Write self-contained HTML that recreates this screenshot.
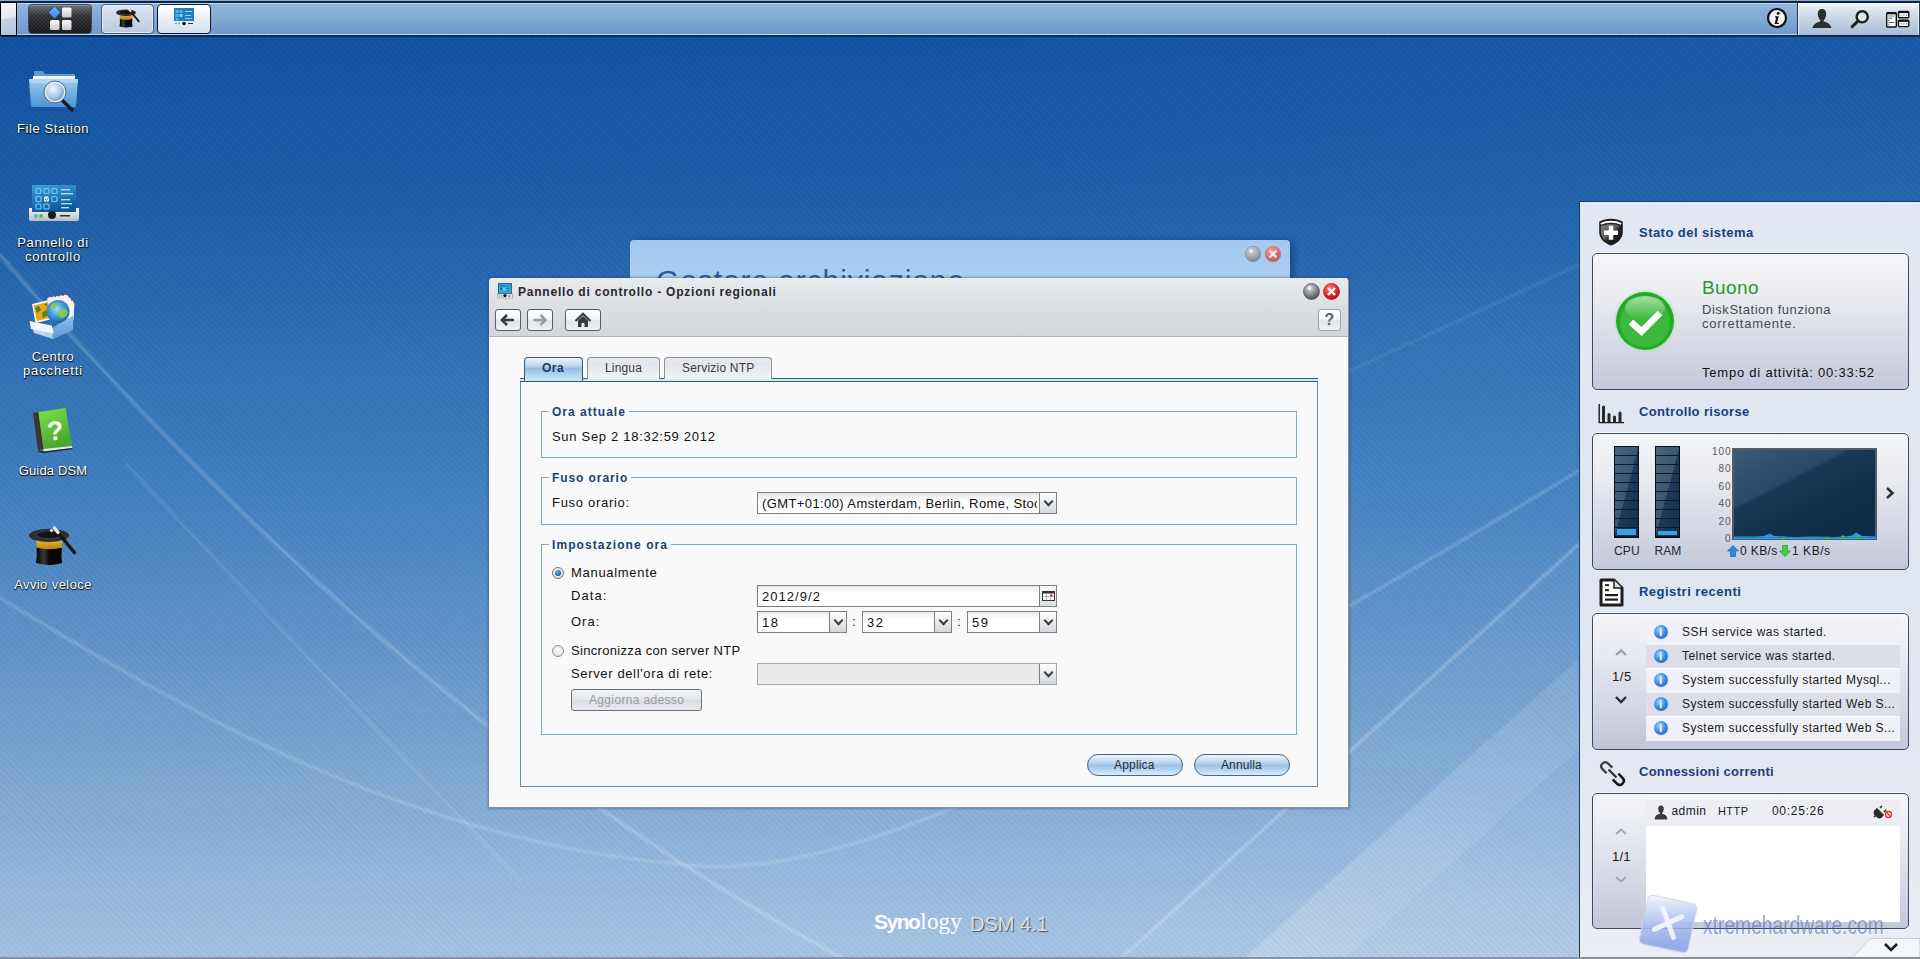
<!DOCTYPE html>
<html><head><meta charset="utf-8">
<style>
*{box-sizing:border-box}
html,body{margin:0;padding:0}
body{width:1920px;height:959px;overflow:hidden;position:relative;font-family:"Liberation Sans",sans-serif;font-size:12px;color:#000}
.a{position:absolute}
#bg{left:0;top:0;width:1920px;height:959px;background:linear-gradient(to bottom,#0d4c9c 0px,#1152a3 40px,#1d5fab 205px,#3577bb 400px,#4281c1 490px,#6f9fd0 705px,#9fbfe0 910px,#a6c5e4 959px)}
#stripes{left:0;top:0;width:1920px;height:959px;background:repeating-linear-gradient(45deg,rgba(0,0,40,0.028) 0px,rgba(0,0,40,0.028) 2.2px,rgba(255,255,255,0.018) 2.2px,rgba(255,255,255,0.018) 4.5px)}
#top{left:0;top:0;width:1920px;height:37px;background:linear-gradient(to bottom,#8fa8c8 0,#8fa8c8 1px,#0a2448 1px,#0a2448 3px,#c0d8f4 3px,#c0d8f4 4px,#95b5db 4px,#6e9acc 34px,#b8d4f0 34px,#b8d4f0 35px,#0a2a58 35px,#0a2a58 37px)}
.dtxt{color:#fff;font-size:13px;letter-spacing:0.65px;text-align:center;width:110px;left:-2px;line-height:13.6px;text-shadow:0 1px 1px rgba(0,0,0,0.8),1px 1px 1px rgba(0,0,0,0.5),0 0 1px rgba(0,0,0,0.5)}
.nb{border:1px solid #5a5e62;border-radius:3px;background:linear-gradient(to bottom,#ffffff 0,#f4f5f6 45%,#e2e4e6 55%,#eef0f2 100%)}
.tab{top:357px;height:22px;border:1px solid #8a9096;border-bottom:none;border-radius:4px 4px 0 0;background:linear-gradient(to bottom,#e8eaee 0,#e2e6ea 30%,#f2f4f6 100%)}
.fs{left:541px;width:756px;border:1px solid #82a8c0}
.lg{left:549px;padding:0 3px;background:#f9f9f9;font-size:12px;font-weight:bold;color:#1a4274;white-space:nowrap}
.t13{font-size:13px;letter-spacing:0.7px;color:#111;white-space:nowrap}
.t12{font-size:12px;letter-spacing:0.45px;color:#1a1a1a;white-space:nowrap}
.cb{border:1px solid #7f7f7f;background:linear-gradient(to bottom,#e8eaec 0,#ffffff 35%,#ffffff 100%)}
.trg{top:0;width:17px;height:20px;border-left:1px solid #7f7f7f;background:linear-gradient(to bottom,#ffffff 0,#eceef0 40%,#d4d8dc 100%)}
.trg::after{content:"";position:absolute;left:4.5px;top:5px;width:5px;height:5px;border-right:2.4px solid #3a3e42;border-bottom:2.4px solid #3a3e42;transform:rotate(45deg)}
.radio{width:12px;height:12px;border-radius:50%;border:1px solid #8a9096;background:radial-gradient(circle at 50% 40%,#ffffff 0,#e4e6e8 60%,#c4c8cc 100%)}
.radio.on{border-color:#6a7a8a}
.radio.on::after{content:"";position:absolute;left:2px;top:2px;width:6px;height:6px;border-radius:50%;background:radial-gradient(circle at 40% 35%,#6ac0f0 0,#1a6aaa 60%,#0a3a6a 100%)}
.pill{top:754px;width:96px;height:22px;border:1px solid #3e6890;border-radius:11px;background:linear-gradient(to bottom,#eef4fa 0,#c8dcf0 30%,#9cc2e6 55%,#c4e0f6 85%,#dcecf8 100%)}
.sh{left:1639px;font-size:13px;font-weight:bold;color:#17407e;letter-spacing:0.4px;white-space:nowrap}
.card{left:1592px;width:317px;border:1.5px solid #404a5e;border-radius:5px;background:linear-gradient(to bottom,#f5f6f8 0,#e8eaf0 35%,#c3c7da 100%);box-shadow:0 -1px 0 rgba(255,255,255,0.9)}
.bar{top:446px;width:25px;height:92px;border:1.5px solid #0a0e14;background:linear-gradient(105deg,#4a6680 0,#3a5670 50%,#1e3a58 50%,#143050 100%)}
.bar::before{content:"";position:absolute;left:0;top:0;right:0;bottom:0;background:repeating-linear-gradient(to bottom,transparent 0,transparent 7.9px,#0c1a28 7.9px,#0c1a28 9px)}
.bar .fill{position:absolute;left:2px;right:2px;bottom:2px;height:6px;background:#3aa0ea}
.loglist{left:1646px;top:620px;width:254px}
.lr{position:relative;height:24px;padding-left:36px;padding-top:4.7px;font-size:12px;letter-spacing:0.45px;color:#1a1a1a;white-space:nowrap}
.ii{position:absolute;left:8px;top:5px;width:14px;height:14px;border-radius:50%;background:radial-gradient(circle at 40% 35%,#a0d0ff 0,#3a88e0 50%,#1a5ab8 100%)}
.ii::after{content:"i";position:absolute;left:0;top:0;width:14px;text-align:center;font-weight:bold;font-size:11px;line-height:14px;color:#fff}

</style></head>
<body>
<div id="bg" class="a"></div>
<svg class="a" style="left:0;top:0" width="1920" height="959" viewBox="0 0 1920 959">
 <defs><filter id="soft" x="-5%" y="-5%" width="110%" height="110%"><feGaussianBlur stdDeviation="0.9"/></filter>
 <linearGradient id="wedge" x1="0" y1="1" x2="1" y2="0"><stop offset="0" stop-color="#fff" stop-opacity="0.16"/><stop offset="1" stop-color="#fff" stop-opacity="0.05"/></linearGradient></defs>
 <g fill="none" stroke="#ffffff" stroke-linecap="round" filter="url(#soft)">
  <path d="M0 255 Q400 720 842 958" stroke-opacity="0.24" stroke-width="3"/>
  <path d="M127 465 Q300 650 520 880" stroke-opacity="0.12" stroke-width="2.6"/>
  <path d="M0 598 C170 700 400 845 702 866 C850 876 1100 760 1580 470" stroke-opacity="0.2" stroke-width="3"/>
  <path d="M1120 959 L1600 525" stroke-opacity="0.26" stroke-width="3"/>
  <path d="M1000 533 L1600 255" stroke-opacity="0.09" stroke-width="2.6"/>
 </g>
 <path d="M1243 959 L1600 640 L1600 959 Z" fill="url(#wedge)" filter="url(#soft)"/>
 <path d="M1243 959 L1600 640 L1600 730 L1345 959 Z" fill="#ffffff" fill-opacity="0.08" filter="url(#soft)"/>
 <path d="M1120 959 L1600 525 L1600 640 L1243 959 Z" fill="#ffffff" fill-opacity="0.035"/>
 <rect x="0" y="957" width="1920" height="2" fill="#8494ac"/>
</svg>
<div class="a" style="left:0;top:0;width:1920px;height:959px;background:linear-gradient(to right,rgba(0,10,40,0.025) 0,rgba(0,10,40,0) 45%,rgba(255,255,255,0.035) 100%)"></div>
<div id="stripes" class="a"></div>
<div id="top" class="a"></div>
<!-- topbar items -->
<div class="a" style="left:0;top:2px;width:17px;height:34px;border:1.5px solid #000;background:linear-gradient(170deg,#f4f6fa 0,#e4eaf2 45%,#c4d2e4 50%,#b4c6de 100%)"></div>
<div class="a" style="left:28px;top:4px;width:64px;height:30px;border-radius:4px;border:1px solid #3a4a60;background:repeating-conic-gradient(rgba(255,255,255,0.07) 0 25%,rgba(0,0,0,0) 0 50%) 0 0/4px 4px,linear-gradient(to bottom,#6a6e74 0,#2a2c30 40%,#151618 100%);box-shadow:inset 0 1px 0 rgba(255,255,255,0.25)"></div>
<svg class="a" style="left:28px;top:4px" width="64" height="30" viewBox="0 0 64 30">
  <defs><linearGradient id="sq" x1="0" y1="0" x2="0" y2="1"><stop offset="0" stop-color="#fafafa"/><stop offset="1" stop-color="#c8c8c8"/></linearGradient>
  <linearGradient id="dia" x1="0" y1="0" x2="0" y2="1"><stop offset="0" stop-color="#7ab8f8"/><stop offset="1" stop-color="#2a84e8"/></linearGradient></defs>
  <path d="M26.5 2 L32.5 8.5 L26.5 15 L20.5 8.5 Z" fill="url(#dia)" stroke="#1a3a6a" stroke-width="0.6"/>
  <rect x="34" y="3.5" width="9.5" height="10" rx="1.5" fill="url(#sq)"/>
  <rect x="22" y="16" width="9.5" height="10" rx="1.5" fill="url(#sq)"/>
  <rect x="34" y="16" width="9.5" height="10" rx="1.5" fill="url(#sq)"/>
</svg>
<div class="a" style="left:101px;top:4px;width:53px;height:30px;border-radius:4px;border:1px solid #3e5a82;background:linear-gradient(to bottom,#dde6f2 0,#b8cae0 100%);box-shadow:inset 0 0 0 1px rgba(255,255,255,0.6)"></div>
<svg class="a" style="left:115px;top:4.5px" width="26" height="24" viewBox="0 0 52 48">
  <path d="M9.6 27.6 Q22 30.5 35 27.6 Q33.8 36 35 43 Q22 47 9 43 Q10.4 36 9.6 27.6 Z" fill="url(#hat)"/>
  <path d="M9.4 18 L35.2 18 L35 27.8 Q22 30.5 9.6 27.8 Z" fill="url(#band)"/>
  <ellipse cx="22" cy="15.4" rx="20" ry="6.6" fill="#2e2e2e"/>
  <ellipse cx="22" cy="14.8" rx="12.5" ry="4" fill="#141414" stroke="#4a4a4a" stroke-width="0.8"/>
  <path d="M29 10 L47.6 32.8" stroke="#151515" stroke-width="3.6" stroke-linecap="round"/>
  <path d="M27.4 8 L31 12.4" stroke="#ece4fa" stroke-width="3.8" stroke-linecap="round"/>
</svg>
<div class="a" style="left:157px;top:4px;width:54px;height:30px;border-radius:4px;border:1.5px solid #0a1a30;background:linear-gradient(to bottom,#ffffff 0,#d4e0ee 100%)"></div>
<svg class="a" style="left:172px;top:8px" width="24" height="20" viewBox="0 0 24 20">
  <rect x="2" y="0" width="20" height="14" fill="#1e7ec0"/>
  <rect x="3.5" y="2" width="3" height="3" fill="#5ab0e0"/><rect x="7.5" y="2" width="3" height="3" fill="#5ab0e0"/>
  <rect x="3.5" y="6" width="3" height="3" fill="#5ab0e0"/><rect x="7.5" y="6" width="3" height="3" fill="#8ad0f0"/>
  <rect x="3.5" y="10" width="3" height="2.5" fill="#5ab0e0"/>
  <rect x="13" y="3" width="7" height="1" fill="#9ad0f0"/><rect x="13" y="7" width="6" height="1" fill="#9ad0f0"/><rect x="13" y="10" width="7" height="1" fill="#9ad0f0"/>
  <rect x="0.5" y="13" width="23" height="5" rx="1" fill="#e8ecf0"/>
  <circle cx="4" cy="15.5" r="1" fill="#4ab0e0"/><circle cx="7" cy="15.5" r="1" fill="#50c050"/>
  <circle cx="12" cy="15.5" r="1.8" fill="#111"/><rect x="16" y="15" width="5" height="1" fill="#333"/>
</svg>
<!-- right of topbar -->
<div class="a" style="left:1797px;top:3px;width:123px;height:32px;border-left:1.5px solid #1a3050;border-right:1.5px solid #2a4060;background:linear-gradient(to bottom,#f4f7fc 0,#dde6f0 20%,#c4d2e4 55%,#aabdd6 100%);box-shadow:inset 1px 1px 0 rgba(255,255,255,0.8),inset -1px 0 0 rgba(255,255,255,0.6)"></div>
<svg class="a" style="left:1766px;top:7px" width="22" height="22" viewBox="0 0 22 22">
  <circle cx="11" cy="11" r="9" fill="#f4f4f4" stroke="#111" stroke-width="2.2"/>
  <circle cx="12.2" cy="6.2" r="1.5" fill="#111"/>
  <path d="M9.2 9.2 L12.8 9.2 L11 15.8 L13 15.8 L12.6 17 L8.6 17 L10.2 10.4 L8.9 10.4 Z" fill="#111"/>
</svg>
<svg class="a" style="left:1811px;top:8px" width="22" height="21" viewBox="0 0 22 21">
  <path d="M11 1 C7.8 1 6.6 3.6 6.8 6.6 C7 9.6 8.6 11.6 9.4 12.4 L9.4 13.4 C6 14.2 2.6 15.8 1.6 19.6 L1.6 20 L20.4 20 L20.4 19.6 C19.4 15.8 16 14.2 12.6 13.4 L12.6 12.4 C13.4 11.6 15 9.6 15.2 6.6 C15.4 3.6 14.2 1 11 1 Z" fill="#2e2e2e"/>
</svg>
<svg class="a" style="left:1850px;top:9px" width="21" height="20" viewBox="0 0 21 20">
  <circle cx="12.2" cy="7.8" r="5.6" fill="#dde4ee" stroke="#1e1e1e" stroke-width="2.4"/>
  <path d="M8.2 11.8 L2.2 17.8" stroke="#1e1e1e" stroke-width="3" stroke-linecap="round"/>
</svg>
<svg class="a" style="left:1885px;top:10px" width="25" height="18" viewBox="0 0 25 18">
  <rect x="1.7" y="2.7" width="9.6" height="14.3" rx="1" fill="#fff" stroke="#111" stroke-width="1.4"/>
  <rect x="1.7" y="2.7" width="9.6" height="1.6" fill="#111"/>
  <g fill="#444"><rect x="3.3" y="5.6" width="6" height="0.8"/><rect x="3.3" y="7.8" width="4" height="0.8"/><rect x="3.3" y="10" width="1" height="1"/><rect x="3.3" y="12.2" width="6" height="0.8"/><rect x="3.3" y="14.3" width="1" height="1"/></g>
  <rect x="13.5" y="1.5" width="10.3" height="6.3" rx="1" fill="#fff" stroke="#111" stroke-width="1.4"/>
  <rect x="13.5" y="1.5" width="10.3" height="1.6" fill="#111"/>
  <rect x="13.5" y="10.3" width="10.3" height="6.3" rx="1" fill="#fff" stroke="#111" stroke-width="1.4"/>
  <rect x="13.5" y="10.3" width="10.3" height="1.6" fill="#111"/>
  <g fill="#555"><rect x="15.5" y="4.6" width="1.2" height="1"/><rect x="18.3" y="4.6" width="1.2" height="1"/><rect x="21" y="4.6" width="1.2" height="1"/><rect x="15.5" y="13.4" width="1.2" height="1"/><rect x="18.3" y="13.4" width="1.2" height="1"/><rect x="21" y="13.4" width="1.2" height="1"/></g>
</svg>

<!-- desktop icons -->
<svg class="a" style="left:28px;top:66px" width="52" height="48" viewBox="0 0 52 48">
  <defs>
   <linearGradient id="fold" x1="0" y1="0" x2="0" y2="1"><stop offset="0" stop-color="#9ccaf0"/><stop offset="1" stop-color="#4e94d4"/></linearGradient>
   <radialGradient id="lens" cx="0.4" cy="0.35" r="0.7"><stop offset="0" stop-color="#f4faff"/><stop offset="0.6" stop-color="#a8c8e8"/><stop offset="1" stop-color="#5a88b8"/></radialGradient>
  </defs>
  <path d="M6 5 L15 5 L17 8 L47 8 L47 12 L6 12 Z" fill="#5c9ad8"/>
  <rect x="5" y="10" width="42" height="6" fill="#f2f0e0"/>
  <path d="M1 13 L50 13 L48 41 L3 41 Z" fill="url(#fold)"/>
  <path d="M1 13 L50 13 L49.6 17 L1.4 17 Z" fill="#b8dcf8" opacity="0.7"/>
  <path d="M34 34 L44 44" stroke="#1a1a1a" stroke-width="3.2" stroke-linecap="round"/>
  <circle cx="27" cy="26" r="10" fill="url(#lens)" stroke="#e8eef4" stroke-width="2"/>
  <circle cx="27" cy="26" r="11" fill="none" stroke="#2a4a6a" stroke-width="0.8"/>
</svg>
<div class="a dtxt" style="top:122px;letter-spacing:0.59px">File Station</div>

<svg class="a" style="left:28px;top:184px" width="52" height="40" viewBox="0 0 52 40">
  <defs>
   <linearGradient id="scr" x1="0" y1="0" x2="0.3" y2="1"><stop offset="0" stop-color="#3a9ee0"/><stop offset="1" stop-color="#0e5a9a"/></linearGradient>
   <linearGradient id="base" x1="0" y1="0" x2="0" y2="1"><stop offset="0" stop-color="#f8f8f8"/><stop offset="1" stop-color="#b8bcc4"/></linearGradient>
  </defs>
  <rect x="4" y="1" width="44" height="27" fill="url(#scr)"/>
  <g fill="none" stroke="#7cc8ec" stroke-width="1.2">
   <rect x="8" y="4.5" width="5" height="5" rx="1"/><rect x="16" y="4.5" width="5" height="5" rx="1"/><rect x="24" y="4.5" width="5" height="5" rx="1"/>
   <rect x="8" y="12.5" width="5" height="5" rx="1"/><rect x="24" y="12.5" width="5" height="5" rx="1"/>
   <rect x="8" y="20" width="5" height="5" rx="1"/><rect x="16" y="20" width="5" height="5" rx="1"/>
  </g>
  <rect x="16" y="12.5" width="5" height="5" rx="1" fill="#e8f4fa"/>
  <path d="M17 15 L18.5 16.5 L20.5 13.5" stroke="#2a9a4a" stroke-width="1" fill="none"/>
  <g fill="#b4dcf4"><rect x="33" y="5" width="9" height="1.4"/><rect x="33" y="9" width="12" height="1.4"/><rect x="33" y="15" width="9" height="1.4"/><rect x="33" y="19" width="11" height="1.4"/><rect x="33" y="23" width="8" height="1.4"/></g>
  <path d="M1 24 L4 24 L4 28 L48 28 L48 24 L51 24 L51 35 Q51 37 49 37 L3 37 Q1 37 1 35 Z" fill="url(#base)"/>
  <circle cx="8" cy="32" r="2" fill="#50b8e8"/><circle cx="13" cy="32" r="2" fill="#58c048"/>
  <circle cx="24" cy="31" r="4" fill="#1a1a1a"/>
  <rect x="32" y="31" width="10" height="1.5" fill="#333"/>
</svg>
<div class="a dtxt" style="top:236.3px"><span style="letter-spacing:0.65px">Pannello di</span><br><span style="letter-spacing:0.75px">controllo</span></div>

<svg class="a" style="left:28px;top:293px" width="50" height="50" viewBox="0 0 50 50">
  <defs>
   <linearGradient id="boxr" x1="0" y1="0" x2="0" y2="1"><stop offset="0" stop-color="#8ec0f0"/><stop offset="1" stop-color="#5e98d8"/></linearGradient>
   <linearGradient id="boxl" x1="0" y1="0" x2="0" y2="1"><stop offset="0" stop-color="#d8eafc"/><stop offset="1" stop-color="#a8ccf0"/></linearGradient>
   <radialGradient id="glob" cx="0.45" cy="0.4" r="0.65"><stop offset="0" stop-color="#a8dcf8"/><stop offset="0.55" stop-color="#3a94d8"/><stop offset="1" stop-color="#1a5a9a"/></radialGradient>
  </defs>
  <path d="M19 4.5 L39 1.5 L46.5 10 L45.5 27 L24 29 Z" fill="#f4f2f2"/>
  <path d="M19 4.5 L39 1.5 L46.5 10" fill="none" stroke="#b82a3a" stroke-width="1.3" stroke-dasharray="1.6 2.2"/>
  <path d="M4 11 L21 7 L24.5 26 L7.5 30 Z" fill="#f8f8f8"/>
  <path d="M5.5 12.5 L20 9 L23 24.5 L8.8 28 Z" fill="#e8a818"/>
  <path d="M7 15 L11 13 L13 17 L9 20 Z M14 20 L18 17 L20 22 L15 25 Z M16 11 L19 10.5 L19.5 14 Z" fill="#3a7020" opacity="0.8"/>
  <circle cx="30" cy="18.5" r="11.5" fill="url(#glob)"/>
  <path d="M22 14 Q25 9 30 10 Q28 14 25 16 Q23 18 22 14 Z M31 17 Q37 13 40 19 Q39 25 33 25 Q29 22 31 17 Z" fill="#8ccc40" opacity="0.9"/>
  <path d="M3 29 L24 35 L45 23 L45 25 L24 37 Z" fill="#4a80c0"/>
  <path d="M24 35 L45 23 L45 37 L25 46 Z" fill="url(#boxr)"/>
  <path d="M3.5 30 L24 35.5 L25 46 L6 40 Z" fill="url(#boxl)"/>
  <path d="M1.5 28 L23.6 32.6 L26 40.5 L3 36 Z" fill="#eef6fe"/>
</svg>
<div class="a dtxt" style="top:350.2px"><span style="letter-spacing:0.6px">Centro</span><br><span style="letter-spacing:0.9px">pacchetti</span></div>

<svg class="a" style="left:31px;top:407px" width="44" height="48" viewBox="0 0 44 48">
  <defs><linearGradient id="bk" x1="0" y1="0" x2="0.4" y2="1"><stop offset="0" stop-color="#7ee04a"/><stop offset="1" stop-color="#48a82a"/></linearGradient></defs>
  <path d="M2 6 L7.4 4.9 L12.5 42 L7 43.5 Z" fill="#3e3430"/>
  <path d="M7.4 4.9 L34.6 1 L41 39 L12.5 42 Z" fill="url(#bk)"/>
  <path d="M12.5 42 L41 39 L41.2 41 L13 44.5 Z" fill="#e4e8dc"/>
  <path d="M7 43.5 L13 44.5 L41.2 41 L41.3 42.3 L13 46 L7 45 Z" fill="#2a2420"/>
  <text x="24" y="33" font-family="Liberation Sans" font-weight="bold" font-size="27" fill="#f4fff0" text-anchor="middle" transform="rotate(-5 24 22)">?</text>
</svg>
<div class="a dtxt" style="top:464px;letter-spacing:0.15px">Guida DSM</div>

<svg class="a" style="left:27px;top:520px" width="52" height="48" viewBox="0 0 52 48">
  <defs>
   <linearGradient id="hat" x1="0" y1="0" x2="1" y2="0"><stop offset="0" stop-color="#000"/><stop offset="0.3" stop-color="#3a3a3a"/><stop offset="0.5" stop-color="#0a0a0a"/><stop offset="1" stop-color="#000"/></linearGradient>
   <linearGradient id="band" x1="0" y1="0" x2="0" y2="1"><stop offset="0" stop-color="#f0c040"/><stop offset="1" stop-color="#b8840a"/></linearGradient>
  </defs>
  <path d="M9.6 27.6 Q22 30.5 35 27.6 Q33.8 36 35 43 Q22 47 9 43 Q10.4 36 9.6 27.6 Z" fill="url(#hat)"/>
  <path d="M9.4 18 L35.2 18 L35 27.8 Q22 30.5 9.6 27.8 Z" fill="url(#band)"/>
  <ellipse cx="22" cy="15.4" rx="20" ry="6.6" fill="#2e2e2e"/>
  <ellipse cx="22" cy="14.8" rx="12.5" ry="4" fill="#141414" stroke="#4a4a4a" stroke-width="0.8"/>
  <path d="M29 10 L47.6 32.8" stroke="#151515" stroke-width="3.2" stroke-linecap="round"/>
  <path d="M27.4 8 L31 12.4" stroke="#ece4fa" stroke-width="3.4" stroke-linecap="round"/>
  <circle cx="24.5" cy="10.5" r="1.6" fill="#ffffff" opacity="0.9"/>
</svg>
<div class="a dtxt" style="top:577.7px;letter-spacing:0.41px">Avvio veloce</div>

<!-- back dialog -->
<div class="a" style="left:630px;top:240px;width:660px;height:60px;border-radius:4px 4px 0 0;background:linear-gradient(to bottom,#a6c8ee 0,#acd0f2 100%);box-shadow:4px 0 6px rgba(0,20,60,0.35);overflow:hidden">
  <div class="a" style="left:26px;top:24.4px;font-size:30px;color:#1f5ea6;letter-spacing:0.9px;white-space:nowrap">Gestore archiviazione</div>
</div>
<svg class="a" style="left:1243px;top:244px" width="40" height="20" viewBox="0 0 40 20">
  <defs>
   <radialGradient id="gb2" cx="0.4" cy="0.3" r="0.7"><stop offset="0" stop-color="#d0d8e0"/><stop offset="1" stop-color="#7a8894"/></radialGradient>
   <radialGradient id="rb2" cx="0.4" cy="0.3" r="0.7"><stop offset="0" stop-color="#f0a0a0"/><stop offset="1" stop-color="#c05858"/></radialGradient>
  </defs>
  <circle cx="10" cy="10" r="7.8" fill="url(#gb2)" stroke="#8898a4" stroke-width="0.8"/>
  <rect x="6.5" y="5.5" width="3" height="3" fill="#e8f0f8"/>
  <circle cx="30" cy="10" r="7.8" fill="url(#rb2)" stroke="#d07878" stroke-width="0.8"/>
  <path d="M26.5 6.5 L33.5 13.5 M33.5 6.5 L26.5 13.5" stroke="#f4e8e8" stroke-width="2.2"/>
</svg>

<!-- front dialog -->
<div class="a" style="left:488px;top:277px;width:862px;height:532px;border-radius:4px 4px 0 0;background:rgba(40,50,60,0.35);filter:blur(1px)"></div>
<div class="a" style="left:489px;top:278px;width:860px;height:530px;border-radius:4px 4px 0 0;background:#f9f9f9;overflow:hidden;border-right:1px solid #8a9098;border-bottom:1px solid #8a9098">
  <div class="a" style="left:0;top:0;width:860px;height:59px;background:linear-gradient(to bottom,#e8eaec 0,#dcdfe2 50%,#d2d6da 100%);border-bottom:1.5px solid #aeb2b6"></div>
</div>
<svg class="a" style="left:497px;top:282px" width="16" height="17" viewBox="0 0 16 17">
  <rect x="1" y="1" width="14" height="11" fill="#1e6a9a"/>
  <rect x="2" y="2" width="12" height="9" fill="#38a8dc"/>
  <g fill="#1e78b0"><rect x="3" y="3" width="2.2" height="2"/><rect x="6" y="3" width="2.2" height="2"/><rect x="3" y="6" width="2.2" height="2"/><rect x="9.5" y="3.5" width="3.5" height="1"/><rect x="9.5" y="6" width="3" height="1"/><rect x="9.5" y="8.5" width="3.5" height="1"/></g>
  <rect x="6" y="5.5" width="2.2" height="3" fill="#5ae0f4"/>
  <rect x="0.5" y="12" width="15" height="4" fill="#eef2f0" stroke="#8a8e90" stroke-width="0.6"/>
  <circle cx="2.8" cy="14" r="0.8" fill="#58a870"/><circle cx="4.8" cy="14" r="0.8" fill="#60b060"/>
  <circle cx="8" cy="13.6" r="1.7" fill="#1a1a1a"/><rect x="11" y="13.6" width="2.5" height="0.9" fill="#444"/>
</svg>
<div class="a" style="left:518px;top:285px;font-size:12px;font-weight:bold;color:#2a2630;letter-spacing:0.78px;white-space:nowrap">Pannello di controllo - Opzioni regionali</div>
<svg class="a" style="left:1301px;top:281px" width="42" height="21" viewBox="0 0 42 21">
  <defs>
   <radialGradient id="gb1" cx="0.4" cy="0.3" r="0.75"><stop offset="0" stop-color="#d8dcdf"/><stop offset="0.5" stop-color="#8a9096"/><stop offset="1" stop-color="#3e4448"/></radialGradient>
   <radialGradient id="rb1" cx="0.4" cy="0.3" r="0.75"><stop offset="0" stop-color="#ff8080"/><stop offset="0.6" stop-color="#e02828"/><stop offset="1" stop-color="#a01010"/></radialGradient>
  </defs>
  <circle cx="10.5" cy="10.5" r="8" fill="url(#gb1)" stroke="#5a6066" stroke-width="0.8"/>
  <rect x="7" y="5.5" width="3" height="3" fill="#f4f8fc"/>
  <circle cx="30.5" cy="10.5" r="8" fill="url(#rb1)" stroke="#b82020" stroke-width="0.8"/>
  <path d="M27 7 L34 14 M34 7 L27 14" stroke="#fff" stroke-width="2.4"/>
</svg>
<!-- nav buttons -->
<div class="a nb" style="left:495px;top:309px;width:26px;height:22px"></div>
<div class="a nb" style="left:527px;top:309px;width:26px;height:22px"></div>
<div class="a nb" style="left:565px;top:309px;width:36px;height:22px"></div>
<div class="a nb" style="left:1318px;top:309px;width:23px;height:22px;border-color:#a0a4a8"></div>
<svg class="a" style="left:495px;top:309px" width="106" height="22" viewBox="0 0 106 22">
  <path d="M7 11 L19 11 M12 6 L7 11 L12 16" stroke="#383c40" stroke-width="2.6" fill="none" stroke-linejoin="miter"/>
  <path d="M38.5 11 L50.5 11 M45.5 6 L50.5 11 L45.5 16" stroke="#9a9ea2" stroke-width="2.6" fill="none"/>
  <path d="M80.5 12 L88 4.8 L95.5 12" stroke="#383c40" stroke-width="2.2" fill="none"/>
  <path d="M83 11.5 L88 7 L93 11.5 L93 18 L89.5 18 L89.5 14 L86.5 14 L86.5 18 L83 18 Z" fill="#383c40"/>
</svg>
<div class="a" style="left:1318px;top:310.5px;width:23px;text-align:center;font-size:16px;font-weight:bold;color:#606468">?</div>

<!-- tabs -->
<div class="a" style="left:520px;top:378px;width:798px;height:409px;border:1px solid #6a90a8;border-top:none"></div>
<div class="a" style="left:520px;top:378px;width:798px;height:4px;background:#c8ecfa;border-top:1px solid #3a5a70;border-bottom:1px solid #3a5a70"></div>
<div class="a tab" style="left:587px;width:73px"></div>
<div class="a tab" style="left:664px;width:108px"></div>
<div class="a" style="left:524px;top:357px;width:59px;height:24px;border:1px solid #3a5a70;border-bottom:none;border-radius:4px 4px 0 0;background:linear-gradient(to bottom,#eef3f9 0,#bcd4ec 35%,#94bce2 45%,#b4d6f0 75%,#c8ecfa 100%)"></div>
<div class="a" style="left:542px;top:361px;font-size:12px;font-weight:bold;color:#1a3a64;letter-spacing:0.45px">Ora</div>
<div class="a" style="left:605px;top:361px;font-size:12px;color:#3a3a3a;letter-spacing:0.16px">Lingua</div>
<div class="a" style="left:682px;top:361px;font-size:12px;color:#3a3a3a;letter-spacing:0.2px">Servizio NTP</div>

<!-- fieldsets -->
<div class="a fs" style="top:411px;height:47px"></div>
<div class="a lg" style="top:405px;letter-spacing:1.02px">Ora attuale</div>
<div class="a t13" style="left:552px;top:429px;letter-spacing:0.7px">Sun Sep 2 18:32:59 2012</div>

<div class="a fs" style="top:477px;height:48px"></div>
<div class="a lg" style="top:471px;letter-spacing:0.92px">Fuso orario</div>
<div class="a t13" style="left:552px;top:494.5px">Fuso orario:</div>
<div class="a cb" style="left:757px;top:492px;width:300px;height:22px;background:linear-gradient(to bottom,#e4e8ea 0,#fbfbfb 40%,#ffffff 100%)">
  <div class="a t13" style="left:4px;top:2.8px;width:275px;overflow:hidden;letter-spacing:0.4px">(GMT+01:00) Amsterdam, Berlin, Rome, Stockholm, Vienna</div>
  <div class="a trg" style="left:281px"></div>
</div>

<div class="a fs" style="top:544px;height:191px"></div>
<div class="a lg" style="top:538.3px;letter-spacing:1.09px">Impostazione ora</div>
<div class="a radio on" style="left:552px;top:567px"></div>
<div class="a t13" style="left:571px;top:565px">Manualmente</div>
<div class="a t13" style="left:571px;top:588px;letter-spacing:1.1px">Data:</div>
<div class="a cb" style="left:757px;top:585px;width:300px;height:22px;background:linear-gradient(to bottom,#e8eaec 0,#ffffff 35%,#ffffff 100%)">
  <div class="a t13" style="left:4px;top:2.8px;letter-spacing:1.05px">2012/9/2</div>
  <div class="a" style="left:281px;top:0;width:17px;height:20px;border-left:1px solid #7f7f7f;background:linear-gradient(to bottom,#f8f8f8 0,#dcdfe2 100%)">
   <svg class="a" style="left:2px;top:5px" width="13" height="10" viewBox="0 0 13 10"><rect x="0.5" y="0.5" width="12" height="9" fill="#fff" stroke="#333"/><rect x="0.5" y="0.5" width="12" height="2" fill="#333"/><path d="M0.5 5.5 H12.5 M4.5 2.5 V9.5 M8.5 2.5 V9.5" stroke="#888" stroke-width="0.6"/><circle cx="9.5" cy="4.5" r="1.2" fill="#c03030"/></svg>
  </div>
</div>
<div class="a t13" style="left:571px;top:613.8px;letter-spacing:1px">Ora:</div>
<div class="a cb" style="left:757px;top:611px;width:90px;height:22px"><div class="a t13" style="left:4px;top:2.7px;letter-spacing:1.5px">18</div><div class="a trg" style="left:71px"></div></div>
<div class="a t13" style="left:852px;top:614px">:</div>
<div class="a cb" style="left:862px;top:611px;width:90px;height:22px"><div class="a t13" style="left:4px;top:2.7px;letter-spacing:1.5px">32</div><div class="a trg" style="left:71px"></div></div>
<div class="a t13" style="left:957px;top:614px">:</div>
<div class="a cb" style="left:967px;top:611px;width:90px;height:22px"><div class="a t13" style="left:4px;top:2.7px;letter-spacing:1.5px">59</div><div class="a trg" style="left:71px"></div></div>

<div class="a radio" style="left:552px;top:645px"></div>
<div class="a t13" style="left:571px;top:643px;letter-spacing:0.32px">Sincronizza con server NTP</div>
<div class="a t13" style="left:571px;top:665.5px;letter-spacing:0.64px">Server dell'ora di rete:</div>
<div class="a cb" style="left:757px;top:663px;width:300px;height:22px;background:#ebebeb;border-color:#a8a8a8"><div class="a trg" style="left:281px"></div></div>
<div class="a" style="left:571px;top:689px;width:131px;height:22px;border:1px solid #6a6e72;border-radius:3px;background:linear-gradient(to bottom,#f4f6f8 0,#e2e6ea 50%,#d8dde2 51%,#e8ecf0 100%)"></div>
<div class="a" style="left:589px;top:692.7px;font-size:12px;color:#9a9a9a;letter-spacing:0.34px">Aggiorna adesso</div>

<div class="a pill" style="left:1087px"></div>
<div class="a pill" style="left:1194px"></div>
<div class="a" style="left:1114px;top:757.8px;font-size:12px;color:#2a2e36;letter-spacing:0.18px">Applica</div>
<div class="a" style="left:1221px;top:757.8px;font-size:12px;color:#2a2e36;letter-spacing:0.12px">Annulla</div>

<!-- sidebar -->
<div class="a" style="left:1579px;top:201px;width:341px;height:758px;border-left:1.5px solid #143a6c;border-top:1.5px solid #143a6c;background:linear-gradient(to bottom,#e2e8f2 0,#dfe6f0 50%,#e3e8f1 80%,#ebeff4 100%)"></div>

<svg class="a" style="left:1598px;top:218px" width="26" height="28" viewBox="0 0 26 28">
  <defs><linearGradient id="shd" x1="0" y1="0" x2="1" y2="1"><stop offset="0" stop-color="#808080"/><stop offset="0.45" stop-color="#5e5e5e"/><stop offset="0.56" stop-color="#262626"/><stop offset="1" stop-color="#0e0e0e"/></linearGradient></defs>
  <path d="M13 0.8 C8.5 0.8 4.5 2 1.2 3.8 L1.2 14 C1.2 21 7 25.6 13 27.5 C19 25.6 24.8 21 24.8 14 L24.8 3.8 C21.5 2 17.5 0.8 13 0.8 Z" fill="#1c1c1c"/>
  <path d="M2.8 6 C8 3 18 3 23.2 6" stroke="#ffffff" stroke-width="1.9" fill="none"/>
  <path d="M2.8 8.2 C8 5.6 18 5.6 23.2 8.2 L23.2 14 C23.2 20 18.5 24 13 25.8 C7.5 24 2.8 20 2.8 14 Z" fill="url(#shd)"/>
  <path d="M10.8 7.8 H15.2 V12.6 H20 V17 H15.2 V21.8 H10.8 V17 H6 V12.6 H10.8 Z" fill="#fff"/>
</svg>
<div class="a sh" style="top:224.5px;letter-spacing:0.46px">Stato del sistema</div>

<div class="a card" style="top:253px;height:137px"></div>
<svg class="a" style="left:1610px;top:286px" width="70" height="70" viewBox="0 0 70 70">
  <defs>
   <radialGradient id="gc" cx="0.5" cy="0.5" r="0.5"><stop offset="0.55" stop-color="#2aa82a"/><stop offset="0.85" stop-color="#1e981e"/><stop offset="1" stop-color="#6ad06a" stop-opacity="0"/></radialGradient>
   <linearGradient id="gl" x1="0" y1="0" x2="0" y2="1"><stop offset="0" stop-color="#ffffff" stop-opacity="0.55"/><stop offset="1" stop-color="#ffffff" stop-opacity="0"/></linearGradient>
  </defs>
  <circle cx="35" cy="35" r="31" fill="#9ae89a" opacity="0.35"/>
  <circle cx="35" cy="35" r="29" fill="#24aa24"/>
  <circle cx="35" cy="36" r="25" fill="#3cb83c"/>
  <ellipse cx="35" cy="22" rx="20" ry="12" fill="url(#gl)"/>
  <path d="M21 36 L31.5 45.5 L50 27" stroke="#fff" stroke-width="6.5" fill="none" stroke-linecap="butt" stroke-linejoin="miter"/>
</svg>
<div class="a" style="left:1702px;top:277.4px;font-size:19px;color:#2a9a2a;letter-spacing:0.4px">Buono</div>
<div class="a" style="left:1702px;top:302.3px;font-size:13px;color:#4a4a4a;letter-spacing:0.53px;white-space:nowrap">DiskStation funziona</div><div class="a" style="left:1702px;top:315.7px;font-size:13px;color:#4a4a4a;letter-spacing:0.77px;white-space:nowrap">correttamente.</div>
<div class="a t13" style="left:1702px;top:365.3px;letter-spacing:0.78px">Tempo di attività: 00:33:52</div>

<svg class="a" style="left:1598px;top:402px" width="28" height="22" viewBox="0 0 28 22">
  <path d="M1.2 2 V20.6 H26" stroke="#1a1a1a" stroke-width="1.4" fill="none"/>
  <path d="M4 20 V5 Q4 3.5 5.5 3.5 Q7 3.5 7 5 V20 Z" fill="#2a2a2a"/>
  <path d="M9.5 20 V12.5 Q9.5 11 11 11 Q12.5 11 12.5 12.5 V20 Z" fill="#2a2a2a"/>
  <path d="M15 20 V15 Q15 13.5 16.5 13.5 Q18 13.5 18 15 V20 Z" fill="#2a2a2a"/>
  <path d="M20.5 20 V11 Q20.5 9.5 22 9.5 Q23.5 9.5 23.5 11 V20 Z" fill="#2a2a2a"/>
</svg>
<div class="a sh" style="top:404px;letter-spacing:0.35px">Controllo risorse</div>

<div class="a card" style="top:433px;height:137px"></div>
<div class="a bar" style="left:1614px"><div class="fill"></div></div>
<div class="a bar" style="left:1655px"><div class="fill" style="height:4px"></div></div>
<div class="a" style="left:1614px;top:544.4px;font-size:12px;color:#1a2a3a;letter-spacing:0.2px">CPU</div>
<div class="a" style="left:1654.5px;top:544.4px;font-size:12px;color:#1a2a3a;letter-spacing:0px">RAM</div>
<div class="a" style="left:1690px;top:442.8px;width:41.5px;text-align:right;font-size:10px;line-height:17.45px;color:#585858;letter-spacing:0.95px">100<br>80<br>60<br>40<br>20<br>0</div>
<div class="a" style="left:1732px;top:448px;width:145px;height:92px;border:2px solid #565c62;background:linear-gradient(153deg,#3c5c7a 0,#2f4f6d 20%,#294967 35.5%,#193955 37.5%,#12304c 60%,#0c2a46 100%)"></div>
<svg class="a" style="left:1733.5px;top:449.5px" width="142" height="89" viewBox="0 0 142 89">
  <path d="M0 86.5 L22 86.5 L30 86 L36 83.5 L40 86 L60 87 L80 86.5 L100 87 L112 86.5 L118 85.5 L122 82.5 L128 86 L142 86.5 L142 89 L0 89 Z" fill="#2a9ae4"/>
  <path d="M46 89 L50 86 L54 89 Z M88 89 L93 86.5 L98 89 Z M104 89 L109 85 L114 89 Z M120 89 L124 85.5 L129 89 Z" fill="#3ec040"/><path d="M0 87.5 L142 87.5" stroke="#1e8ad0" stroke-width="1"/>
</svg>
<svg class="a" style="left:1885px;top:486px" width="10" height="14" viewBox="0 0 10 14"><path d="M2 2 L7.5 7 L2 12" stroke="#333" stroke-width="2.6" fill="none"/></svg>
<svg class="a" style="left:1727px;top:545px" width="12" height="12" viewBox="0 0 12 12"><path d="M6 0.5 L11.5 6 L8.5 6 L8.5 11.5 L3.5 11.5 L3.5 6 L0.5 6 Z" fill="#2a8ae0" stroke="#1a5aa0" stroke-width="0.6"/></svg>
<div class="a" style="left:1740px;top:543.7px;font-size:12px;color:#1a1a1a;letter-spacing:0.4px">0 KB/s</div>
<svg class="a" style="left:1779px;top:545px" width="12" height="12" viewBox="0 0 12 12"><path d="M6 11.5 L11.5 6 L8.5 6 L8.5 0.5 L3.5 0.5 L3.5 6 L0.5 6 Z" fill="#40d040" stroke="#208a20" stroke-width="0.6"/></svg>
<div class="a" style="left:1792px;top:543.7px;font-size:12px;color:#1a1a1a;letter-spacing:0.55px">1 KB/s</div>

<svg class="a" style="left:1599px;top:578px" width="25" height="29" viewBox="0 0 25 29">
  <path d="M2 2 H15 L23 10 V27 H2 Z" fill="#fff" stroke="#1e1e1e" stroke-width="3" stroke-linejoin="round"/>
  <path d="M15 2 V10 H23" fill="#e0e0e0" stroke="#1e1e1e" stroke-width="1.5"/>
  <rect x="6" y="6" width="4" height="2.2" fill="#333"/><rect x="6" y="11" width="4" height="2.2" fill="#333"/>
  <rect x="6" y="16" width="13" height="2.2" fill="#1a1a1a"/><rect x="6" y="20.5" width="13" height="2.2" fill="#1a1a1a"/>
</svg>
<div class="a sh" style="top:584px;letter-spacing:0.48px">Registri recenti</div>

<div class="a card" style="top:613px;height:137px"></div>
<div class="a" style="left:1594px;top:615px;width:52px;height:133px;border-radius:4px 0 0 4px;background:linear-gradient(to bottom,rgba(244,245,250,0.6) 0,rgba(190,194,214,0.5) 100%)"></div>
<div class="a" style="left:1646px;top:620px;width:254px;height:121px;background:#eff1f6"></div>
<div class="a" style="left:1646px;top:645px;width:254px;height:23px;background:#dcdfe8"></div>
<div class="a" style="left:1646px;top:693px;width:254px;height:23px;background:#dcdfe8"></div>
<div class="a" style="left:1646px;top:668px;width:254px;height:1px;background:#fafbfd"></div>
<div class="a" style="left:1646px;top:716px;width:254px;height:1px;background:#fafbfd"></div>
<svg class="a" style="left:1614px;top:646px" width="14" height="60" viewBox="0 0 14 60">
  <path d="M2 9 L7 4.5 L12 9" stroke="#9a9ea6" stroke-width="2.2" fill="none"/>
  <path d="M2 51 L7 56 L12 51" stroke="#2a2e36" stroke-width="2.4" fill="none"/>
</svg>
<div class="a" style="left:1612px;top:668.6px;font-size:13px;color:#1a1a1a;letter-spacing:0.6px">1/5</div>
<div class="a loglist">
  <div class="lr"><span class="ii"></span>SSH service was started.</div>
  <div class="lr"><span class="ii"></span>Telnet service was started.</div>
  <div class="lr"><span class="ii"></span>System successfully started Mysql...</div>
  <div class="lr"><span class="ii"></span>System successfully started Web S...</div>
  <div class="lr"><span class="ii"></span>System successfully started Web S...</div>
</div>

<svg class="a" style="left:1599px;top:760px" width="28" height="28" viewBox="0 0 28 28">
  <g transform="rotate(45 8 8)"><path d="M11.5 4 H5.6 Q1.6 4 1.6 8 Q1.6 12 5.6 12 H11.5" stroke="#3e3e3e" stroke-width="2.3" fill="none"/></g>
  <g transform="rotate(45 19 19)"><path d="M15.5 15 H21.4 Q25.4 15 25.4 19 Q25.4 23 21.4 23 H15.5" stroke="#151515" stroke-width="2.5" fill="none"/></g>
  <path d="M9.5 9.5 L17.5 17.5" stroke="#2a2a2a" stroke-width="2.2"/>
</svg>
<div class="a sh" style="top:764.2px;letter-spacing:0.24px">Connessioni correnti</div>

<div class="a card" style="top:793px;height:136px"></div>
<div class="a" style="left:1594px;top:795px;width:52px;height:132px;border-radius:4px 0 0 4px;background:linear-gradient(to bottom,rgba(244,245,250,0.6) 0,rgba(190,194,214,0.5) 100%)"></div>
<div class="a" style="left:1646px;top:800px;width:254px;height:26px;background:#eceef4"></div>
<div class="a" style="left:1646px;top:826px;width:254px;height:96px;background:#ffffff"></div>
<svg class="a" style="left:1614px;top:824px" width="14" height="62" viewBox="0 0 14 62">
  <path d="M2 10 L7 5.5 L12 10" stroke="#a4a8b0" stroke-width="2" fill="none"/>
  <path d="M2 53 L7 57.5 L12 53" stroke="#a4a8b0" stroke-width="2" fill="none"/>
</svg>
<div class="a" style="left:1612px;top:849px;font-size:13px;color:#1a1a1a;letter-spacing:0.2px">1/1</div>
<svg class="a" style="left:1654px;top:805px" width="14" height="15" viewBox="0 0 14 15">
  <path d="M7 0.5 C4.8 0.5 4 2.3 4.2 4.3 C4.4 6.3 5.4 7.6 6 8.1 L6 8.8 C3.6 9.3 1.3 10.4 0.8 13.2 L0.8 14.5 L13.2 14.5 L13.2 13.2 C12.7 10.4 10.4 9.3 8 8.8 L8 8.1 C8.6 7.6 9.6 6.3 9.8 4.3 C10 2.3 9.2 0.5 7 0.5 Z" fill="#3a3a3a"/>
</svg>
<div class="a" style="left:1671.5px;top:804.4px;font-size:12px;color:#1a1a1a;letter-spacing:0.45px">admin</div>
<div class="a" style="left:1718px;top:805px;font-size:11px;color:#1a1a1a;letter-spacing:0.43px">HTTP</div>
<div class="a" style="left:1772px;top:804.4px;font-size:12px;color:#1a1a1a;letter-spacing:0.7px">00:25:26</div>
<svg class="a" style="left:1873px;top:805px" width="20" height="14" viewBox="0 0 20 14">
  <path d="M1 12 L5 8 M4 4 L10 10 L7.5 12.5 Q5.5 13 4 11.5 L2.5 10 Q1 8.5 1.5 6.5 Z M7 3 L9 1 M11 7 L13 5" stroke="#2a2a2a" stroke-width="1.6" fill="#2a2a2a"/>
  <circle cx="15.5" cy="9.5" r="3" fill="none" stroke="#e03030" stroke-width="1.3"/>
  <path d="M13.5 7.5 L17.5 11.5" stroke="#e03030" stroke-width="1.2"/>
</svg>

<!-- bottom tab -->
<svg class="a" style="left:1840px;top:936px" width="80" height="23" viewBox="0 0 80 23">
  <path d="M11 23 L30 2.5 L80 2.5 L80 23 Z" fill="#f4f6fa" stroke="#c8ccd4" stroke-width="1"/>
  <path d="M45 8 L51 14 L57 8" stroke="#1a1a1a" stroke-width="2.6" fill="none"/>
</svg>
<div class="a" style="left:1579px;top:957px;width:341px;height:2px;background:#8a8e96"></div>

<!-- logo -->
<div class="a" style="left:874px;top:909.4px;font-size:21px;color:#ffffff;white-space:nowrap"><span style="font-weight:bold;letter-spacing:-1.5px">Syno</span><span style="font-family:'Liberation Serif',serif;font-size:23px;letter-spacing:0.15px;margin-left:1px">logy</span></div>
<div class="a" style="left:970px;top:913.3px;font-size:20px;color:#dde0e4;white-space:nowrap;text-shadow:1px 1px 1px rgba(50,60,80,0.85)">DSM 4.1</div>
<!-- watermark -->
<svg class="a" style="left:1630px;top:888px" width="260" height="71" viewBox="0 0 260 71">
  <defs><linearGradient id="wm" x1="0" y1="0" x2="0.3" y2="1"><stop offset="0" stop-color="#f4f8ff"/><stop offset="0.45" stop-color="#b4c8f0"/><stop offset="1" stop-color="#8aa0e4"/></linearGradient></defs>
  <g transform="rotate(12 38 36)">
   <rect x="13" y="11" width="50" height="50" rx="5" fill="url(#wm)" opacity="0.85" stroke="#d0d8ec" stroke-width="1.2"/>
   <path d="M30 22 L46 48 M50 26 L26 44" stroke="#f4f8ff" stroke-width="5" stroke-linecap="round" opacity="0.9"/>
  </g>
</svg>
<div class="a" style="left:1703px;top:911px;font-size:25px;color:#5a70b8;opacity:0.6;white-space:nowrap;transform:scaleX(0.77);transform-origin:0 0">xtremehardware.com</div>


</body></html>
